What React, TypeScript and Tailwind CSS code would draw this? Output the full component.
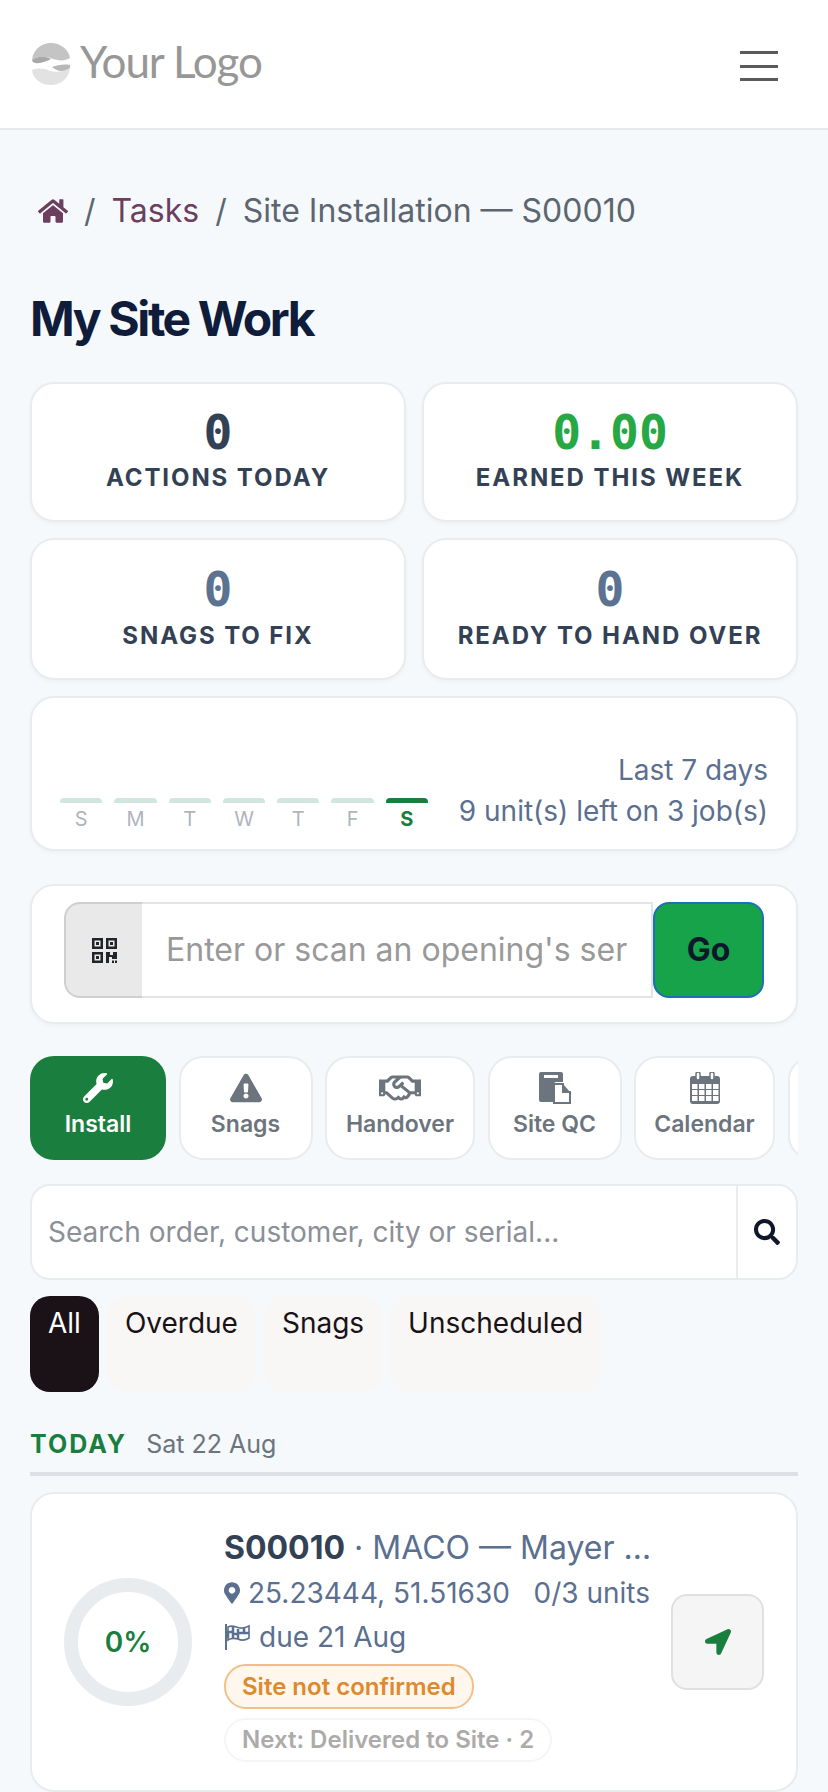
import React from "react";
import {
  FaHome,
  FaWrench,
  FaExclamationTriangle,
  FaRegHandshake,
  FaSearch,
  FaMapMarkerAlt,
  FaLocationArrow,
} from "react-icons/fa";

const Logo = () => (
  <svg width="42" height="42" viewBox="0 0 42 42" className="shrink-0">
    <path d="M2 17C3 7 11 0 21 0s18 7 19 15c-5 3-10 3-17 1-8-3-15-3-21 1z" fill="#c4c4c4" />
    <path d="M2 17c6-4 13-4 19-1-4 2-11 5-15 4-2 0-4-1-4-3z" fill="#a8a8a8" />
    <path d="M2 27c6-2 11-2 18 1 8 2 14 0 20-3-1 10-9 17-19 17S3 36 2 27z" fill="#e2e2e2" />
    <path d="M22 24c5-2 12-3 18-2l0 3c-5 3-11 5-18-1z" fill="#b8b8b8" />
  </svg>
);

const Qr = () => (
  <svg width="25" height="25" viewBox="0 0 25 25" className="text-[#212529]" fill="currentColor">
    <path fillRule="evenodd" d="M0 0h11v11H0zM2.5 2.5v6h6v-6zM14 0h11v11H14zM16.5 2.5v6h6v-6zM0 14h11v11H0zM2.5 16.5v6h6v-6z" />
    <rect x="4" y="4" width="3" height="3" />
    <rect x="18" y="4" width="3" height="3" />
    <rect x="4" y="18" width="3" height="3" />
    <path d="M14 14h4v3h3v-3h4v7h-5v-2h-3v6h-3z" />
    <rect x="20" y="22.5" width="2" height="2.5" />
    <rect x="23" y="22.5" width="2" height="2.5" />
  </svg>
);

const Paste = () => (
  <svg width="32" height="32" viewBox="0 0 32 32">
    <path d="M2 0h20a2 2 0 0 1 2 2v8h-6a4 4 0 0 0-4 4v16H2a2 2 0 0 1-2-2V2a2 2 0 0 1 2-2z" fill="currentColor" />
    <rect x="5" y="3" width="14" height="3" fill="#fff" />
    <path d="M15 12h9v8h7v11H15z" fill="#fff" stroke="currentColor" strokeWidth="2" />
    <path d="M24 12l7 8h-7z" fill="currentColor" />
  </svg>
);

const Calendar = () => (
  <svg width="30" height="32" viewBox="0 0 30 32">
    <rect x="0" y="4" width="30" height="28" rx="3" fill="currentColor" />
    <rect x="6" y="0" width="4" height="8" rx="2" fill="#fff" stroke="currentColor" strokeWidth="1.5" />
    <rect x="20" y="0" width="4" height="8" rx="2" fill="#fff" stroke="currentColor" strokeWidth="1.5" />
    <g fill="#fff">
      {[12, 18, 24].map((y) =>
        [2, 9, 16, 23].map((x) => <rect key={`${x}-${y}`} x={x} y={y} width="5.5" height="5" />)
      )}
    </g>
  </svg>
);

const CheckeredFlag = () => (
  <svg width="26" height="26" viewBox="0 0 26 26" className="shrink-0" fill="none" stroke="currentColor">
    <path d="M2 0v26" strokeWidth="2" />
    <path d="M4 3c6-3 9 2 14 1 3 0 5-1 7-2v12c-3 2-7 3-11 1-4-1-7-1-10 1z" strokeWidth="1.6" />
    <path d="M9 3v5H4v6M14 5v5H9v5M20 4v5h-6v6M20 9h5" strokeWidth="2.5" />
  </svg>
);

const Stat: React.FC<{ value: string; label: string; color: string; box: string; gap: string }> = ({ value, label, color, box, gap }) => (
  <div className={`flex flex-col items-center rounded-[24px] border-2 border-[#e9ecef] bg-white shadow-[0_2px_4px_rgba(0,0,0,0.03)] ${box}`}>
    <div className={`font-['DejaVu_Sans_Mono',monospace] text-[48px] leading-[48px] font-bold ${color}`}>{value}</div>
    <div className={`${gap} text-[24px] leading-[32px] font-bold tracking-[0.08em] text-[#334155] uppercase`}>{label}</div>
  </div>
);

const days = ["S", "M", "T", "W", "T", "F", "S"];

const tabs = [
  { label: "Install", icon: <FaWrench size={30} />, w: "w-[136px]", active: true },
  { label: "Snags", icon: <FaExclamationTriangle size={32} />, w: "w-[134px]" },
  { label: "Handover", icon: <FaRegHandshake size={42} />, w: "w-[150px]" },
  { label: "Site QC", icon: <Paste />, w: "w-[134px]" },
  { label: "Calendar", icon: <Calendar />, w: "w-[141px]" },
  { label: "", icon: null, w: "w-[135px]" },
];

const pills = ["All", "Overdue", "Snags", "Unscheduled"];

export default function App() {
  return (
    <div className="h-[1792px] overflow-hidden bg-[#f5f9fc] font-[Inter,sans-serif] text-[#0f172a]">
      <header className="flex h-[130px] items-center justify-between border-b-2 border-[#e6e8ea] bg-white pr-[50px] pl-[30px]">
        <div className="flex items-center gap-[8px]">
          <Logo />
          <span className="mb-[6px] font-['Lato',sans-serif] text-[44px] leading-none tracking-[-0.025em] text-[#979797]">Your Logo</span>
        </div>
        <div className="mt-[4px] flex w-[38px] flex-col gap-[10.5px]">
          <span className="h-[3px] bg-[#5a5a5a]" />
          <span className="h-[3px] bg-[#5a5a5a]" />
          <span className="h-[3px] bg-[#5a5a5a]" />
        </div>
      </header>

      <main className="px-[30px]">
        <nav className="mt-[58px] ml-[8px] flex items-center text-[32px] leading-[46px] text-[#5d6670]">
          <FaHome size={30} className="text-[#6b3f5d]" />
          <span className="mx-[16px]">/</span>
          <span className="text-[#6b3f5d]">Tasks</span>
          <span className="mx-[16px]">/</span>
          <span>Site Installation — S00010</span>
        </nav>

        <h1 className="mt-[56px] text-[48px] leading-[58px] font-bold tracking-[-0.05em] text-[#0f1c3a]">My Site Work</h1>

        <div className="mt-[34px] grid grid-cols-2 gap-x-[16px] gap-y-[16px]">
          <Stat value="0" label="Actions today" color="text-[#334155]" box="h-[140px] pt-[24px]" gap="mt-[6px]" />
          <Stat value="0.00" label="Earned this week" color="text-[#28a745]" box="h-[140px] pt-[24px]" gap="mt-[6px]" />
          <Stat value="0" label="Snags to fix" color="text-[#5b7391]" box="h-[142px] pt-[25px]" gap="mt-[7px]" />
          <Stat value="0" label="Ready to hand over" color="text-[#5b7391]" box="h-[142px] pt-[25px]" gap="mt-[7px]" />
        </div>

        <section className="mt-[16px] flex h-[155px] items-end justify-between rounded-[24px] border-2 border-[#e9ecef] bg-white pr-[28px] pb-[16px] pl-[28px] shadow-[0_2px_4px_rgba(0,0,0,0.03)]">
          <div className="flex w-[368px] gap-[12px]">
            {days.map((d, i) => (
              <div key={i} className="flex flex-1 flex-col items-center">
                <span className={`h-[5px] w-full rounded-t-[4px] ${i === 6 ? "bg-[#1a7f3e]" : "bg-[#d1e7dd]"}`} />
                <span className={`mt-[2px] text-[20px] leading-[28px] ${i === 6 ? "font-bold text-[#1a7f3e]" : "text-[#adb5bd]"}`}>{d}</span>
              </div>
            ))}
          </div>
          <div className="pb-[1px] text-right text-[28px] leading-[41px] text-[#5b6f8f]">
            <div>Last 7 days</div>
            <div>9 unit(s) left on 3 job(s)</div>
          </div>
        </section>

        <section className="mt-[33px] rounded-[24px] border-2 border-[#e9ecef] bg-white px-[32px] pt-[16px] pb-[24px] shadow-[0_2px_4px_rgba(0,0,0,0.03)]">
          <div className="flex h-[96px]">
            <div className="flex w-[78px] items-center justify-center rounded-l-[16px] border-2 border-r-0 border-[#cfcfcf] bg-[#e9e9e9]">
              <Qr />
            </div>
            <input
              readOnly
              placeholder="Enter or scan an opening's serial number"
              className="min-w-0 flex-1 border-2 border-l-0 border-[#e4e4e4] bg-white pr-[24px] pl-[24px] text-[32px] outline-none placeholder:text-[#999]"
            />
            <button className="w-[111px] rounded-[16px] border-2 border-[#1d6fb8] bg-[#16a34a] text-[32px] font-bold text-[#0f172a]">Go</button>
          </div>
        </section>

        <div className="mt-[32px] flex h-[104px] gap-[12.5px] overflow-hidden">
          {tabs.map((t, i) => (
            <div
              key={i}
              className={`flex shrink-0 flex-col items-center rounded-[24px] ${t.w} ${
                t.active ? "bg-[#1a7f3e] pt-[14px] text-white" : "border-2 border-[#e9ecef] bg-white pt-[12px] text-[#6c757d]"
              }`}
            >
              <div className="flex h-[36px] items-center">{t.icon}</div>
              <span className="text-[23px] leading-[36px] font-semibold">{t.label}</span>
            </div>
          ))}
        </div>

        <div className="mt-[24px] flex h-[96px] overflow-hidden rounded-[20px] border-2 border-[#e9ecef] bg-white">
          <input
            readOnly
            placeholder="Search order, customer, city or serial..."
            className="min-w-0 flex-1 pl-[16px] text-[28px] outline-none placeholder:text-[#8b8f96]"
          />
          <div className="flex w-[60px] items-center justify-center border-l-2 border-[#e9ecef]">
            <FaSearch size={26} className="text-[#0f172a]" />
          </div>
        </div>

        <div className="mt-[16px] flex h-[96px] gap-[8px]">
          {pills.map((p, i) => (
            <div
              key={p}
              className={`rounded-[20px] px-[18px] pt-[10px] text-[28px] leading-[34px] ${
                i === 0 ? "bg-[#1a1216] text-white" : "bg-[#f8f7f5] text-[#1a1216]"
              }`}
            >
              {p}
            </div>
          ))}
        </div>

        <div className="mt-[34px] flex items-center gap-[19px] border-b-4 border-[#dde1e6] pb-[10px]">
          <span className="text-[25px] leading-[36px] font-bold tracking-[0.08em] text-[#1a7f3e]">TODAY</span>
          <span className="text-[25px] leading-[36px] text-[#6c757d]">Sat 22 Aug</span>
        </div>

        <section className="mt-[16px] flex h-[300px] items-center rounded-[24px] border-2 border-[#e9ecef] bg-white pr-[32px] pl-[32px]">
          <div className="relative h-[128px] w-[128px] shrink-0">
            <svg width="128" height="128" viewBox="0 0 128 128">
              <circle cx="64" cy="64" r="57" fill="none" stroke="#e9ecef" strokeWidth="14" />
            </svg>
            <span className="absolute inset-0 flex items-center justify-center text-[28px] font-semibold text-[#1a7f3e]">0%</span>
          </div>
          <div className="ml-[32px] w-[428px] min-w-0 shrink-0 pt-[2px] text-[#5b6f8f]">
            <div className="truncate text-[32px] leading-[46px]">
              <span className="font-bold text-[#334155]">S00010</span> · MACO — Mayer Fenster GmbH
            </div>
            <div className="flex items-center justify-between pr-[2px] text-[28px] leading-[44px]">
              <span className="flex items-center gap-[8px]">
                <FaMapMarkerAlt className="h-[22px] w-[16px]" />
                25.23444, 51.51630
              </span>
              <span>0/3 units</span>
            </div>
            <div className="flex items-center gap-[9px] text-[28px] leading-[44px]">
              <CheckeredFlag />
              due 21 Aug
            </div>
            <div className="mt-[5px] w-fit rounded-[22px] border-2 border-[#f0c088] bg-[#fff7ed] px-[16px] text-[24px] leading-[41px] font-semibold text-[#dd8a2e]">
              Site not confirmed
            </div>
            <div className="mt-[9px] w-fit rounded-[22px] border-2 border-[#f5f5f5] px-[16px] text-[24px] leading-[40px] font-semibold text-[#adabaa]">
              Next: Delivered to Site · 2
            </div>
          </div>
          <div className="ml-auto flex h-[96px] w-[93px] items-center justify-center rounded-[16px] border-2 border-[#e0e0e0] bg-[#f5f5f5]">
            <FaLocationArrow size={26} className="text-[#1a7f3e]" />
          </div>
        </section>
      </main>
    </div>
  );
}
